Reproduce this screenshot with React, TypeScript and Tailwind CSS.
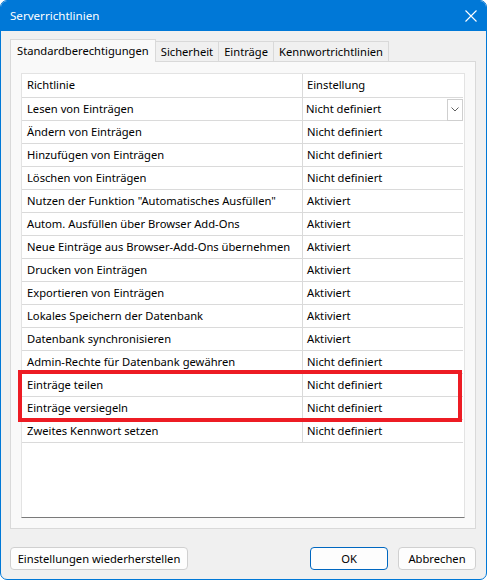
import React from 'react';

type Row = { name: string; value: string };

const rows: Row[] = [
  { name: 'Lesen von Einträgen', value: 'Nicht definiert' },
  { name: 'Ändern von Einträgen', value: 'Nicht definiert' },
  { name: 'Hinzufügen von Einträgen', value: 'Nicht definiert' },
  { name: 'Löschen von Einträgen', value: 'Nicht definiert' },
  { name: 'Nutzen der Funktion "Automatisches Ausfüllen"', value: 'Aktiviert' },
  { name: 'Autom. Ausfüllen über Browser Add-Ons', value: 'Aktiviert' },
  { name: 'Neue Einträge aus Browser-Add-Ons übernehmen', value: 'Aktiviert' },
  { name: 'Drucken von Einträgen', value: 'Aktiviert' },
  { name: 'Exportieren von Einträgen', value: 'Aktiviert' },
  { name: 'Lokales Speichern der Datenbank', value: 'Aktiviert' },
  { name: 'Datenbank synchronisieren', value: 'Aktiviert' },
  { name: 'Admin-Rechte für Datenbank gewähren', value: 'Nicht definiert' },
  { name: 'Einträge teilen', value: 'Nicht definiert' },
  { name: 'Einträge versiegeln', value: 'Nicht definiert' },
  { name: 'Zweites Kennwort setzen', value: 'Nicht definiert' },
];

const tabs = ['Sicherheit', 'Einträge', 'Kennwortrichtlinien'];

const App: React.FC = () => {
  return (
    <div className="w-[487px] h-[580px] bg-white font-['Noto_Sans',sans-serif] text-[11.2px] text-black leading-none">
      <div className="w-[487px] h-[580px] rounded-[7px] border border-[#0078d7] bg-[#f0f0f0] overflow-hidden flex flex-col">
        {/* title bar */}
        <div className="h-[30px] bg-[#0078d7] flex items-center justify-between pl-[9px] pr-[9px] text-white shrink-0">
          <span className="text-[11.6px]">Serverrichtlinien</span>
          <svg width="12" height="12" viewBox="0 0 12 12">
            <path d="M0.5 0.5 L11.5 11.5 M11.5 0.5 L0.5 11.5" stroke="white" strokeWidth="1.1" />
          </svg>
        </div>

        <div className="flex-1 flex flex-col pt-[8px] pl-[9px] pr-[10px]">
          {/* tabs */}
          <div className="flex items-end h-[22px]">
            <div className="h-[23px] -mb-[1px] relative z-10 border border-b-0 border-[#d9d9d9] bg-[#f9f9f9] px-[6px] flex items-center">
              Standardberechtigungen
            </div>
            {tabs.map((t) => (
              <div key={t} className="h-[20px] border border-l-0 border-b-0 border-[#d9d9d9] bg-[#f0f0f0] px-[5px] flex items-center">
                {t}
              </div>
            ))}
          </div>

          {/* panel */}
          <div className="h-[468px] border border-[#d9d9d9] bg-[#f9f9f9] pt-[11px] px-[10px]">
            <div className="relative h-[445px] bg-white border border-[#e3e3e3] border-b-[#7a7a7a]">
              <div className="grid grid-cols-[281px_1fr]">
                <div className="h-[24px] border-b border-r border-[#dadada] pl-[5px] pb-[1px] flex items-center">Richtlinie</div>
                <div className="h-[24px] border-b border-[#dadada] mr-[1px] pl-[4px] pb-[1px] flex items-center">Einstellung</div>
                {rows.map((r, i) => (
                  <React.Fragment key={r.name}>
                    <div className="h-[23px] border-b border-r border-[#dadada] pl-[5px] pb-[1px] flex items-center whitespace-nowrap">
                      {r.name}
                    </div>
                    {i === 0 ? (
                      <div className="h-[23px] border-b border-[#dadada] mr-[1px] pl-[3px] flex items-center justify-between">
                        <span className="pb-[1px]">{r.value}</span>
                        <div className="w-[16px] h-[22px] border border-[#cfcfcf] bg-white flex items-center justify-center -mb-[1px]">
                          <svg width="8" height="5" viewBox="0 0 8 5">
                            <path d="M0.5 0.5 L4 4 L7.5 0.5" stroke="#606060" fill="none" strokeWidth="1" />
                          </svg>
                        </div>
                      </div>
                    ) : (
                      <div className="h-[23px] border-b border-[#dadada] mr-[1px] pl-[4px] pb-[1px] flex items-center">{r.value}</div>
                    )}
                  </React.Fragment>
                ))}
              </div>
              {/* highlight */}
              <div className="absolute left-[-4px] top-[296px] w-[444px] h-[52px] border-[4px] border-[#ed1c24]" />
            </div>
          </div>

          {/* buttons */}
          <div className="flex items-center mt-[18px]">
            <button className="h-[23px] w-[178px] rounded-[4px] border border-[#d0d0d0] bg-[#fdfdfd] text-[11.2px]">
              Einstellungen wiederherstellen
            </button>
            <div className="flex-1" />
            <button className="h-[23px] w-[78px] rounded-[4px] border border-[#0067c0] bg-[#fdfdfd] text-[11.2px]">OK</button>
            <button className="h-[23px] w-[78px] ml-[10px] rounded-[4px] border border-[#d0d0d0] bg-[#fdfdfd] text-[11.2px]">
              Abbrechen
            </button>
          </div>
        </div>
      </div>
    </div>
  );
};

export default App;
